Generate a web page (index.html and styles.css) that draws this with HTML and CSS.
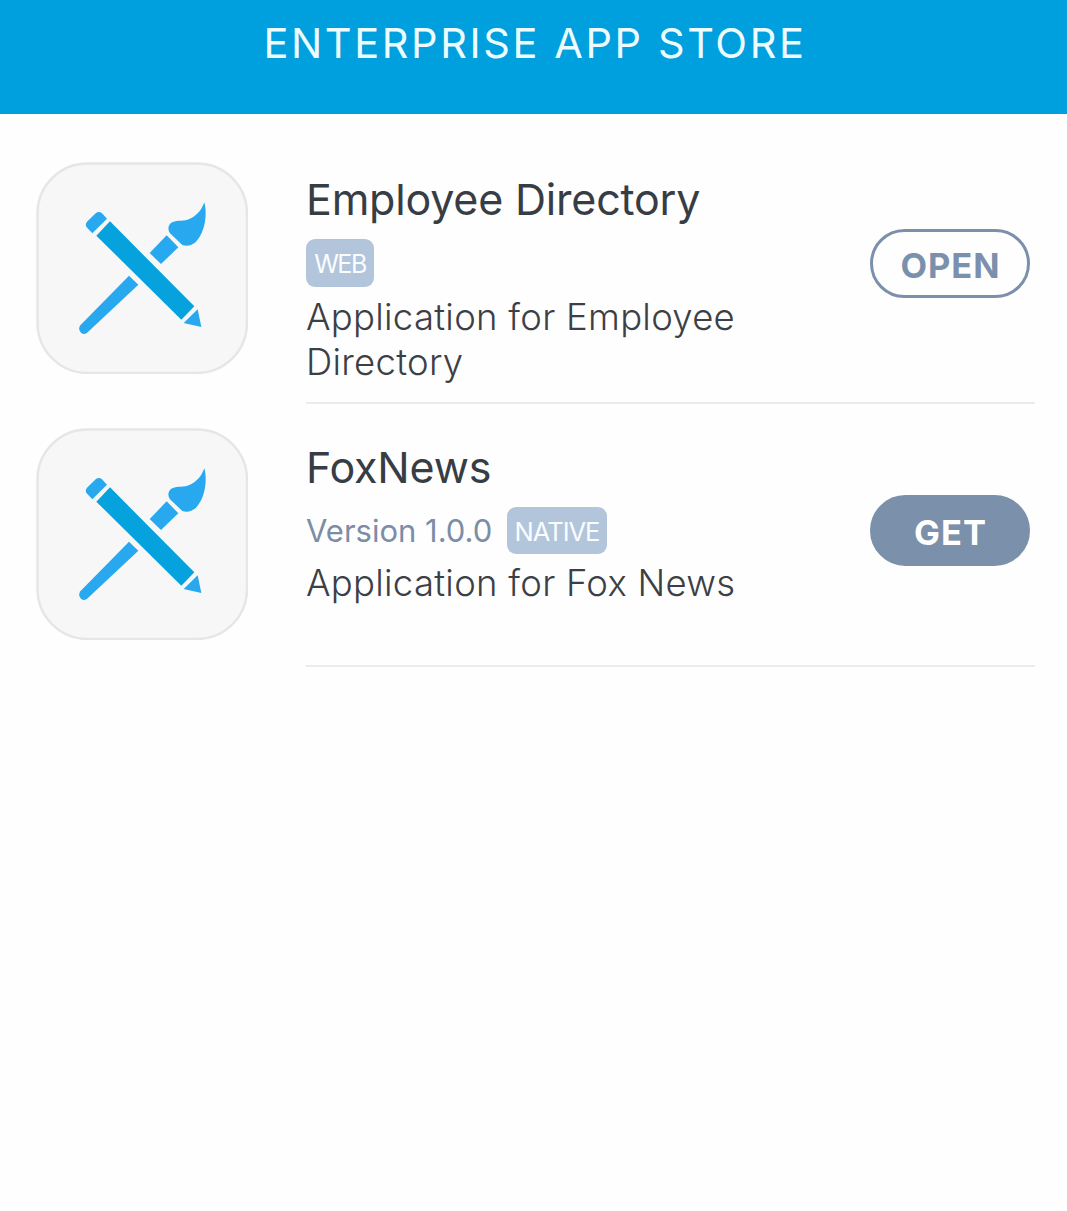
FILE: index.html
```html
<!DOCTYPE html>
<html lang="en">
<head>
<meta charset="utf-8">
<title>Enterprise App Store</title>
<link rel="stylesheet" href="styles.css">
</head>
<body>
<svg class="defs" aria-hidden="true">
  <symbol id="app-icon" viewBox="0 0 212 212">
    <rect class="tile" x="1.5" y="1.5" width="209.500" height="209.500" rx="50"/>
    <g transform="translate(34 33) scale(.33333)">
      <path class="light" d="M52 99 Q43 90 51 80 L77 55 Q87 47 96 55 L111 71 L67 115 Z"/>
      <path class="dark" d="M120 79 L373 334 L334 374 L79 122 Z"/>
      <path class="light" d="M383 343 L394 396 L341 384 Z"/>
      <path class="light" d="M177 242 L205 269 L53 412 Q43 421 33 413 Q23 403 31 391 Z"/>
      <path class="light" d="M290 121 L325 157 L273 207 L239 174 Z"/>
      <path class="light" d="M403 22 C393 50 374 69 347 76 C326 78 310 77 300 87 Q290 99 300 115 L337 150 Q359 157 378 140 C407 110 412 54 403 22 Z"/>
    </g>
  </symbol>
</svg>
<header class="header"><h1 class="title">ENTERPRISE APP STORE</h1></header>
<main class="list">
  <article class="app app-web">
    <svg class="icon"><use href="#app-icon"/></svg>
    <div class="content">
      <div class="info">
        <h2 class="name">Employee Directory</h2>
        <div class="meta"><span class="badge web">WEB</span></div>
        <p class="desc">Application for Employee Directory</p>
      </div>
      <button class="action open">OPEN</button>
    </div>
  </article>
  <article class="app app-native">
    <svg class="icon"><use href="#app-icon"/></svg>
    <div class="content">
      <div class="info">
        <h2 class="name">FoxNews</h2>
        <div class="meta"><span class="version">Version 1.0.0</span><span class="badge native">NATIVE</span></div>
        <p class="desc">Application for Fox News</p>
      </div>
      <button class="action get">GET</button>
    </div>
  </article>
</main>
</body>
</html>
```
FILE: styles.css
```css
* { box-sizing: border-box; }
body { margin: 0; min-height: 1211px; background: #fefefe; font-family: Inter, "Liberation Sans", sans-serif; color: #373d45; }
.defs { position: absolute; width: 0; height: 0; }
h1, h2, p { margin: 0; font-weight: 400; }
.header { height: 114px; padding: 18px 0 0 3px; background: #009fde; text-align: center; }
.title { font-size: 41.500px; line-height: 51px; letter-spacing: 2.600px; color: #ecfcff; }
.list { display: flex; flex-direction: column; gap: 24px; padding: 48px 32px 0 36px; }
.app { display: flex; gap: 58px; }
.icon { flex: none; width: 212px; height: 212px; }
.tile { fill: #f7f7f7; stroke: #e6e6e6; stroke-width: 2.5; }
.light { fill: #27a8ef; }
.dark { fill: #05a2de; }
.content { flex: 1; display: flex; justify-content: space-between; padding-right: 5px; border-bottom: 2px solid #ebebec; }
.app-web .content { height: 242px; padding-top: 12px; }
.app-native .content { height: 239px; padding-top: 14px; }
.info { width: 470px; white-space: nowrap; }
.name { font-size: 43px; line-height: 50px; font-weight: 380; letter-spacing: -.2px; }
.meta { display: flex; margin-top: 15px; height: 48px; }
.app-native .meta { height: 47px; }
.badge { display: flex; align-items: center; justify-content: center; width: 68px; height: 100%; padding-top: 2px; border-radius: 9px; background: #b2c5db; color: #fafdff; font-size: 25.500px; letter-spacing: -1px; }
.web { padding-top: 1px; font-size: 25px; letter-spacing: -1.500px; }
.native { width: 100px; }
.version { width: 201px; font-size: 31px; line-height: 47px; color: #7b8da7; }
.desc { margin-top: 7px; width: 450px; font-size: 36.500px; line-height: 45px; font-weight: 300; letter-spacing: .26px; white-space: normal; color: #3c4045; }
.app-web .desc { margin-top: 8px; }
.action { flex: none; width: 160px; padding: 3px 0 0 1px; border: 3px solid #7b90aa; border-radius: 36px; font: 700 34.500px Inter, sans-serif; letter-spacing: 1px; }
.open { height: 69px; margin-top: 55px; background: transparent; color: #7b90ac; }
.get { height: 71px; margin-top: 53px; background: #7b90aa; color: #fff; }
```
